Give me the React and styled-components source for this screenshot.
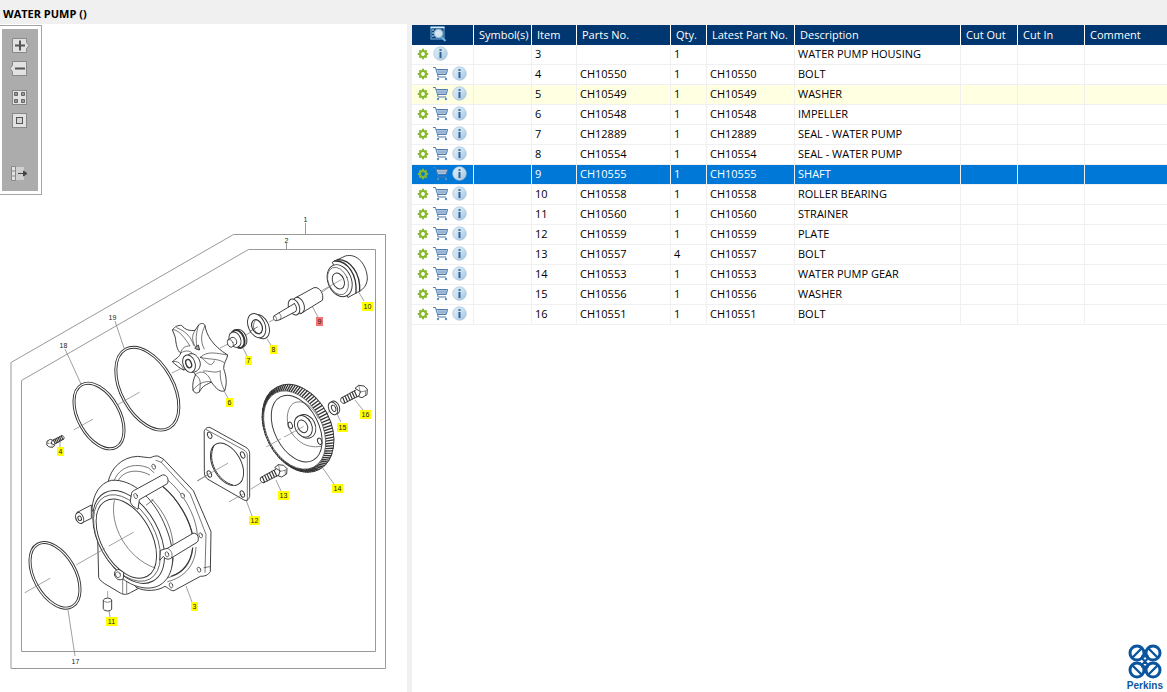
import React, { useState } from "react";
import styled, { createGlobalStyle } from "styled-components";

const GlobalStyle = createGlobalStyle`
  * { box-sizing: border-box; }
  body {
    margin: 0;
    background: #fff;
    color: #000;
    font: 11px/17px "Open Sans", "Noto Sans", sans-serif;
  }
`;

const Page = styled.div`
  display: flex;
  flex-direction: column;
  min-height: 100vh;
`;

const TitleBar = styled.header`
  height: 24px;
  padding: 4px 3px 0;
  background: #f0f0f0;
`;

const Title = styled.h1`
  margin: 0;
  font-size: 11px;
  line-height: 20px;
  font-weight: 700;
`;

const Workspace = styled.main`
  flex: 1;
  display: grid;
  grid-template-columns: 407px 5px minmax(0, 1fr);
`;

const DrawingPane = styled.section`
  position: relative;
  min-width: 0;
`;

const Splitter = styled.div`
  background: #f0f0f0;
`;

const Drawing = styled.svg`
  display: block;
  width: 100%;
  height: auto;
`;

const Callout = styled.text`
  font: 7px "Liberation Sans", sans-serif;
  text-anchor: middle;
  fill: #222;
`;

const Toolbar = styled.nav`
  position: absolute;
  top: 1px;
  left: 0;
  padding: 3px 3px 3px 2px;
  background: #fff;
  border: 1px solid #a5a5a5;
  border-left: 0;
`;

const ToolList = styled.div`
  display: flex;
  flex-direction: column;
  gap: 7px;
  width: 36px;
  padding: 9px 0 9px 8px;
  background: #acacac;
`;

const ToolButton = styled.button`
  display: block;
  width: 20px;
  height: 16px;
  margin: ${(p) => p.$before || 0}px 0 0;
  padding: 0;
  border: 0;
  background: none;
  cursor: pointer;
  svg { display: block; }
`;

const ListPane = styled.section`
  display: flex;
  flex-direction: column;
  min-width: 0;
  overflow: hidden;
`;

const PartsTable = styled.table`
  width: 100%;
  table-layout: fixed;
  border-collapse: separate;
  border-spacing: 0;
  border-top: 1px solid #f0f0f0;
`;

const HeadCell = styled.th`
  height: 20px;
  padding: 0 0 2px 5px;
  border-right: 1px solid #fff;
  background: #003770;
  color: #fff;
  font-weight: 400;
  text-align: left;
  white-space: nowrap;
  &:last-child { border-right: 0; }
`;

const Row = styled.tr`
  background: ${(p) => (p.$selected ? "#0078d7" : p.$marked ? "#ffffe1" : "#fff")};
  color: ${(p) => (p.$selected ? "#fff" : "#000")};
`;

const Cell = styled.td`
  height: 20px;
  padding: 0 0 2px 3px;
  border-right: 1px solid #f0f0f0;
  border-bottom: 1px solid #f0f0f0;
  white-space: nowrap;
  &:last-child { border-right: 0; }
`;

const Actions = styled.div`
  display: flex;
  align-items: center;
  gap: 4px;
  height: 17px;
  padding-left: 2px;
`;

const IconButton = styled.button`
  display: flex;
  padding: 0;
  border: 0;
  background: none;
  cursor: pointer;
`;

const HeadIcon = styled(IconButton)`
  margin-left: 13px;
`;

const Brand = styled.footer`
  display: flex;
  flex-direction: column;
  align-items: center;
  align-self: flex-end;
  margin-top: auto;
  padding-right: 4px;
  color: #0b559f;
  font: 700 10px/12px "Liberation Sans", sans-serif;
`;

const GearIcon = () => (
  <svg width="12" height="12" viewBox="0 0 12 12" fill="none" stroke="#86b82e">
    <path d="M6 .8V3M6 9v2.200M.8 6H3M9 6h2.200M2.400 2.400l1.500 1.500M8.100 8.100l1.500 1.500M9.600 2.400L8.100 3.900M3.900 8.100L2.400 9.600" strokeWidth="2" />
    <circle cx="6" cy="6" r="3" strokeWidth="2.200" />
  </svg>
);

const CartIcon = () => (
  <svg width="15" height="15" viewBox="0 0 15 15" fill="none">
    <path d="M3.500 3.500H14.500l-1.500 5H5z" fill="#c9d8e8" />
    <path d="M6 4v4M8 4v4M10 4v4M12 4v4M4.500 6H14" stroke="#7f9fc4" strokeWidth=".8" />
    <path d="M0 1.500h2.500l2.700 9.500H13M3.300 3.500h11.400l-1.500 5H5" stroke="#4f7bae" />
    <circle cx="5" cy="13" r="1.200" fill="#5b91c0" />
    <circle cx="13" cy="13" r="1.200" fill="#5b91c0" />
  </svg>
);

const InfoIcon = () => (
  <svg width="15" height="15" viewBox="0 0 15 15">
    <defs>
      <linearGradient id="infoFill" x1="0" y1="0" x2="1" y2="1">
        <stop offset="0" stopColor="#dcebf5" />
        <stop offset=".5" stopColor="#c9dfee" />
        <stop offset="1" stopColor="#9dbfd9" />
      </linearGradient>
    </defs>
    <circle cx="7.5" cy="7.5" r="6.8" fill="url(#infoFill)" stroke="#a9c5da" strokeWidth=".7" />
    <rect x="6.500" y="3" width="2" height="2" fill="#3c74aa" />
    <rect x="6.500" y="6" width="2" height="6" fill="#2f6199" />
  </svg>
);

const SearchListIcon = () => (
  <svg width="18" height="16" viewBox="0 0 18 16">
    <rect x="1" y="1" width="13" height="12" fill="#0a3f78" stroke="#78b6dc" />
    <path d="M.5 1.5h14" stroke="#d4ebf7" strokeWidth="1.6" />
    <path d="M2 4h2M2 7h2M2 10h2" stroke="#d4ebf7" />
    <path d="M11.5 11l4 4" stroke="#6eb2dd" strokeWidth="2" />
    <circle cx="8.5" cy="7.5" r="4.2" fill="#d6e3ec" stroke="#8dbbd7" strokeWidth="1.2" />
  </svg>
);

const toolShapes = {
  in: (
    <>
      <path d="M2.5 .5h14v4l2.5 3-2.5 3v4h-14z" />
      <path d="M5 7.5h10M10 2.5v10" stroke="#555" strokeWidth="2" />
    </>
  ),
  out: (
    <>
      <path d="M2.5 .5h14v14h-14v-4L0 7.5l2.5-3z" />
      <path d="M5 7.5h10" stroke="#555" strokeWidth="2" />
    </>
  ),
  tiles: (
    <>
      <rect x="2.5" y=".5" width="14" height="14" />
      <path d="M4.5 2.5h3v3h-3zM11.5 2.5h3v3h-3zM4.5 9.5h3v3h-3zM11.5 9.5h3v3h-3z" fill="#999" stroke="#666" />
    </>
  ),
  fit: (
    <>
      <rect x="2.5" y=".5" width="14" height="14" />
      <rect x="6.500" y="4.500" width="6" height="6" fill="#d4d4d4" stroke="#555" />
    </>
  ),
  export: (
    <>
      <path d="M1.5 .5h4v14h-4zM1.5 5h4M1.5 10h4" />
      <path d="M6 1h8v13H6z" fill="#cfcfcf" stroke="none" />
      <path d="M8 7.5h8M13.5 5l3.500 2.500-3.500 2.500z" fill="#444" stroke="#444" />
    </>
  ),
};

const tools = [
  { id: "in", label: "Zoom in" },
  { id: "out", label: "Zoom out" },
  { id: "tiles", label: "Overview", before: 6 },
  { id: "fit", label: "Fit to window" },
  { id: "export", label: "Export", before: 30 },
];

const columns = [
  { label: "", width: 62 },
  { label: "Symbol(s)", width: 58 },
  { label: "Item", width: 45 },
  { label: "Parts No.", width: 94 },
  { label: "Qty.", width: 36 },
  { label: "Latest Part No.", width: 88 },
  { label: "Description", width: 166 },
  { label: "Cut Out", width: 57 },
  { label: "Cut In", width: 67 },
  { label: "Comment" },
];

const parts = [
  ["3", "", "1", "WATER PUMP HOUSING"],
  ["4", "CH10550", "1", "BOLT"],
  ["5", "CH10549", "1", "WASHER"],
  ["6", "CH10548", "1", "IMPELLER"],
  ["7", "CH12889", "1", "SEAL - WATER PUMP"],
  ["8", "CH10554", "1", "SEAL - WATER PUMP"],
  ["9", "CH10555", "1", "SHAFT"],
  ["10", "CH10558", "1", "ROLLER BEARING"],
  ["11", "CH10560", "1", "STRAINER"],
  ["12", "CH10559", "1", "PLATE"],
  ["13", "CH10557", "4", "BOLT"],
  ["14", "CH10553", "1", "WATER PUMP GEAR"],
  ["15", "CH10556", "1", "WASHER"],
  ["16", "CH10551", "1", "BOLT"],
];

const callouts = [
  ["10", 367, 306], ["9", 319, 321], ["8", 273, 349], ["7", 248, 360],
  ["6", 229, 402], ["16", 365, 414], ["15", 342, 427], ["14", 337, 488],
  ["13", 283, 495], ["12", 254, 520], ["4", 60, 451], ["3", 194, 606], ["11", 111, 621],
];

const plainCallouts = [
  ["1", 305, 219], ["2", 286, 240], ["19", 112, 317], ["18", 63, 345], ["17", 75, 661],
];

// Drawing parts are plotted on a grid three times finer than the sheet.
const Fine = ({ x, y, children }) => (
  <g transform={`translate(${x} ${y}) scale(.33333)`}>{children}</g>
);

const Tilted = ({ cx, cy, rx, ry, angle = -29, ...rest }) => (
  <ellipse cx={cx} cy={cy} rx={rx} ry={ry} transform={`rotate(${angle} ${cx} ${cy})`} {...rest} />
);

const ORing = (props) => (
  <>
    <Tilted {...props} fill="none" stroke="#333" strokeWidth="9" />
    <Tilted {...props} fill="none" stroke="#fff" strokeWidth="3.5" />
  </>
);

const pointOn = (cx, cy, rx, ry, deg, t) => {
  const a = (deg * Math.PI) / 180;
  const x = rx * Math.cos(t);
  const y = ry * Math.sin(t);
  return [cx + x * Math.cos(a) - y * Math.sin(a), cy + x * Math.sin(a) + y * Math.cos(a)];
};

const gearTeeth = Array.from({ length: 92 }, (_, i) => {
  const t = (i * Math.PI * 2) / 92;
  const [x1, y1] = pointOn(344, 180, 84, 126, -27, t);
  const [x2, y2] = pointOn(354, 175, 97, 138, -27, t);
  return `M${x1.toFixed(1)} ${y1.toFixed(1)}L${x2.toFixed(1)} ${y2.toFixed(1)}`;
}).join("");

const Bolt = ({ x, y, s = 1, weight = 1 }) => (
  <g transform={`translate(${x} ${y}) scale(${s})`} strokeWidth={2.8 * weight}>
    <path d="M-60 18 L-16 -6 M-52 34 L-8 12 M-60 18 C-66 24 -60 35 -52 34" />
    <path d="M-56 16l7 17M-49 12l8 17M-42 8l8 17M-35 4l8 17M-28 0l8 17M-21 -3l8 17" strokeWidth={3.4 * weight} />
    <path d="M-18 -12 L-8 -20 L8 -18 L18 -8 L17 8 L2 17 L-8 14 L-3 0 Z" />
    <path d="M-3 0 L12 -3 L18 -8 M12 -3 L13 10 M-8 -20 L-3 0" strokeWidth="1.6" />
  </g>
);

const Exploded = ({ selected }) => (
  <Drawing viewBox="0 24 407 668" role="img" aria-label="Water pump exploded view">
    <g fill="none" stroke="#999">
      <path d="M11 668.500V362.500L233.500 234.500H385.500V668.500Z" />
      <path d="M21.500 651.500V380.500L248.500 249.500H375.500V651.500Z" />
      <path d="M305.500 223V234M286.500 243V249" />
    </g>
    <g fill="none" stroke="#777" strokeWidth=".7">
      <path d="M65 349L81 384M115 321L124 348M68 610L75 656" />
      <path d="M312 306L318 317M358 291L364 301M267 339L271 345M243 348L247 356M224 391L228 398" />
      <path d="M355 400L363 410M337 414L341 422M322 467L334 484M276 480L281 491M246 500L252 516" />
      <path d="M60 441V447M186 586L192 602M109 611L110 617" />
      <path d="M322 292L340 280M269 322L283 315M246 335L259 327M220 348L230 343M172 373L190 364" />
    </g>
    <g fill="#fff" stroke="#333" strokeWidth="2.8" strokeLinejoin="round" strokeLinecap="round">
      <Fine x={0} y={340}>
        <ORing cx={442} cy={146} rx={78} ry={135} />
        <ORing cx={297} cy={228} rx={62} ry={107} />
        <path d="M222 269L278 238M353 194L418 157" stroke="#777" strokeWidth="2" />
        <Bolt x={152} y={309} s={-0.65} weight={1.5} />
      </Fine>
      <Fine x={160} y={210}>
        <path d="M518 156L556 138C592 128 622 166 622 207C620 230 606 241 592 247L565 262Z" />
        <path d="M532 149C573 148 602 192 599 243M524 153C563 151 592 194 588 249" fill="none" strokeWidth="4" />
        <Tilted cx={539} cy={212} rx={35} ry={50} angle={-23} />
        <Tilted cx={534} cy={213} rx={29} ry={43} angle={-23} strokeWidth="1.8" />
        <Tilted cx={535} cy={213} rx={17} ry={25} angle={-23} />
        <path d="M485 242L544 209" stroke="#777" strokeWidth="2" />
        <path d="M407 263L462 233C479 229 493 253 487 271L422 311Z" />
        <Tilted cx={416} cy={286} rx={16} ry={25} angle={-22} />
        <Tilted cx={402} cy={291} rx={16} ry={25} angle={-22} />
        <path d="M403 281L356 309L342 318C338 324 341 332 349 332L360 329L408 304C412 296 408 285 403 281Z" />
        <path d="M356 309C363 312 366 322 360 329M342 318C348 318 352 326 349 332" fill="none" strokeWidth="1.8" />
        <Tilted cx={301} cy={350} rx={25} ry={38} angle={-23} />
        <Tilted cx={290} cy={347} rx={25} ry={38} angle={-23} />
        <Tilted cx={291} cy={350} rx={15} ry={22} angle={-23} strokeWidth="3.5" />
        <path d="M270 364L292 351M285 332C274 350 283 368 298 372" fill="none" strokeWidth="2" />
        <Tilted cx={242} cy={384} rx={17} ry={27} angle={-23} />
        <Tilted cx={234} cy={387} rx={18} ry={28} angle={-23} strokeWidth="6" />
        <Tilted cx={225} cy={389} rx={17} ry={24} angle={-23} />
        <path d="M204 390L216 382C227 381 233 395 229 402L214 411C203 410 200 400 204 390Z" />
        <Tilted cx={211} cy={400} rx={8} ry={12} angle={-23} strokeWidth="1.8" />

        <path d="M38 359C45 348 55 346 65 346C75 360 90 363 105 361L116 345C124 338 132 339 135 347C139 374 157 407 203 435C202 447 190 459 191 476C199 499 202 519 194 542C183 548 169 538 154 516C143 523 127 526 118 546C110 551 103 550 99 540C96 521 101 507 107 493C91 476 81 476 71 480C58 474 47 465 37 455C45 448 60 440 62 429C51 423 48 400 46 383Z" />
        <path d="M38 359C54 356 76 386 90 408C78 407 65 413 62 429M50 353C80 365 94 383 101 406M105 361C92 380 99 398 106 410M116 345C107 371 108 389 110 407M135 347C122 372 121 396 133 417M121 442C142 420 174 431 203 435M121 442C150 450 172 444 191 457M122 442C137 449 151 480 163 453M37 455C52 451 65 460 71 480M63 428C72 423 89 418 98 431M107 493C122 481 142 483 154 516M130 483C148 481 166 492 181 482C179 503 185 528 194 542M99 540C115 521 129 513 152 515M104 493C119 503 125 509 118 546" fill="none" strokeWidth="2" />
        <path d="M105 413L115 405L119 420L108 417Z" fill="#aaa" />
        <path d="M86 433C99 424 119 440 121 461C121 480 106 488 96 487Z" />
        <Tilted cx={87} cy={461} rx={18} ry={27} angle={-20} />
        <Tilted cx={86} cy={461} rx={8} ry={13} angle={-20} strokeWidth="4" />
      </Fine>
      <Fine x={180} y={370}>
        <Tilted cx={354} cy={175} rx={98} ry={139} angle={-27} />
        <path d={gearTeeth} strokeWidth="4" />
        <Tilted cx={344} cy={180} rx={83} ry={125} angle={-27} strokeWidth="2" />
        <Tilted cx={350} cy={176} rx={66} ry={107} angle={-27} />
        <path d="M325 170C315 130 330 103 344 98C371 88 400 111 415 145M325 170C343 211 377 237 423 229" fill="none" strokeWidth="1.8" />
        <Tilted cx={377} cy={169} rx={29} ry={37} angle={-27} />
        <Tilted cx={370} cy={169} rx={25} ry={34} angle={-27} />
        <Tilted cx={368} cy={169} rx={14} ry={20} angle={-27} />
        <Tilted cx={331} cy={166} rx={6} ry={10} angle={-20} />
        <Tilted cx={419} cy={214} rx={6} ry={10} angle={-20} />
        <path d="M260 230L302 207M313 201L370 170M443 128L452 122" stroke="#777" strokeWidth="2" />
        <Tilted cx={465} cy={112} rx={13} ry={20} angle={-23} />
        <Tilted cx={459} cy={115} rx={13} ry={20} angle={-23} />
        <Tilted cx={461} cy={115} rx={6} ry={10} angle={-23} />
        <Bolt x={544} y={66} />
        <Bolt x={303} y={304} />
        <path d="M73 183C76 174 84 169 93 174L196 231C204 235 209 242 209 251V379C207 389 200 394 192 390L84 328C76 323 73 315 73 306Z" />
        <path d="M79 179L190 239C198 243 202 249 202 257V391" fill="none" strokeWidth="2" />
        <Tilted cx={141} cy={283} rx={42} ry={69} angle={-29} />
        <path d="M101 229C80 271 113 333 158 345" fill="none" strokeWidth="3" />
        {[[89, 196], [188, 255], [88, 312], [187, 372]].map(([x, y]) => (
          <Tilted key={`${x}-${y}`} cx={x} cy={y} rx={6} ry={10} angle={-23} />
        ))}
        <path d="M52 332L143 280M148 395L190 372M213 357L244 338" stroke="#777" strokeWidth="2" />
      </Fine>
      <Fine x={0} y={440}>
        <ORing cx={165} cy={406} rx={62} ry={107} />
        <path d="M75 458L150 415" stroke="#777" strokeWidth="2" />
        <path d="M293 290L296 412C299 421 307 426 314 431L361 459C371 465 382 464 391 458L414 446L400 370Z" />
        <path d="M368 415V460M380 420V460" strokeWidth="1.8" />
        <path d="M325 123C333 86 364 51 413 49L446 53C455 55 459 46 474 48L491 58L580 152L633 275L631 394C625 406 613 409 601 409L522 452C513 454 504 443 495 439C475 452 438 457 408 442L340 250Z" />
        <path d="M468 61L484 67L571 162L618 283L615 397M484 67L491 58M343 121C357 81 405 66 446 84L462 98M355 121C370 91 414 85 449 105M504 121C548 156 593 233 592 292M488 139C538 180 571 245 579 292M578 324C575 374 546 404 500 414M588 322C586 374 555 412 503 425M456 178C494 218 519 268 520 325M520 354C516 391 502 411 485 418M612 383L630 380" fill="none" strokeWidth="2" />
        <path d="M488 139C538 180 571 245 579 292M578 324C573 366 550 397 515 408" fill="none" strokeWidth="3.5" />
        <path d="M276 206C279 162 300 129 334 121C397 116 457 172 491 247C531 334 526 407 480 435C445 455 397 440 365 414Z" />
        <path d="M232 217L274 195V235L243 250C229 249 222 232 232 217Z" />
        <Tilted cx={239} cy={234} rx={11} ry={17} angle={-23} />
        <Tilted cx={239} cy={235} rx={5} ry={7} angle={-23} />
        <Tilted cx={386} cy={291} rx={90} ry={151} />
        <Tilted cx={381} cy={294} rx={84} ry={141} strokeWidth="2" />
        <path d="M344 405C340 386 361 383 371 398L370 416C357 424 347 417 344 405Z" />
        <Tilted cx={379} cy={296} rx={75} ry={129} />
        <path d="M343 182C328 254 378 353 465 384" fill="none" strokeWidth="1.8" />
        <Tilted cx={354} cy={404} rx={7} ry={9} angle={-23} strokeWidth="2" />
        <path d="M394 164C394 157 398 153 403 151L487 105C501 102 508 119 502 131L418 179L414 208C403 202 392 195 391 184Z" />
        <path d="M439 195L459 180" fill="none" strokeWidth="2" />
        <Tilted cx={407} cy={168} rx={5} ry={8} angle={-20} strokeWidth="2" />
        <path d="M482 331C488 328 496 327 502 325L579 280C594 277 600 299 591 307L514 354C506 360 495 358 490 349L480 360Z" />
        <path d="M502 325C515 329 520 345 514 354" fill="none" strokeWidth="2" />
        <Tilted cx={501} cy={343} rx={5} ry={8} angle={-20} strokeWidth="2" />
        {[[461, 80], [548, 167], [602, 286], [597, 389], [513, 436]].map(([x, y]) => (
          <Tilted key={`${x}-${y}`} cx={x} cy={y} rx={5} ry={8} angle={-20} strokeWidth="2" />
        ))}
        <path d="M230 374L314 326M327 318L400 277M594 122L622 106M323 454V474" stroke="#777" strokeWidth="2" />
        <path d="M310 481C311 472 334 472 335 481V507C333 515 312 515 310 507Z" />
        <path d="M310 481C312 489 333 489 335 481" fill="none" strokeWidth="1.8" />
      </Fine>
    </g>
    {callouts.map(([n, x, y]) => (
      <g key={n}>
        <rect x={x - (n.length > 1 ? 5 : 3)} y={y - 4} width={n.length > 1 ? 11 : 7} height="9" fill={n === selected ? "#f27272" : "#ffff00"} />
        <Callout x={x + 0.5} y={y + 3}>{n}</Callout>
      </g>
    ))}
    {plainCallouts.map(([n, x, y]) => (
      <Callout key={n} x={x + 0.5} y={y + 3}>{n}</Callout>
    ))}
  </Drawing>
);

const KnotMark = () => (
  <svg width="34" height="36" viewBox="0 0 34 36" fill="none" stroke="#0b559f">
    <g strokeWidth="3">
      <circle cx="9" cy="9" r="7" />
      <circle cx="25" cy="9" r="7" />
      <circle cx="9" cy="26" r="7" />
      <circle cx="25" cy="26" r="7" />
    </g>
    <path d="M4 14L14 4M20 4L30 14M4 21L14 31M20 31L30 21" strokeWidth="2.400" />
    <path d="M13 12.500H21M13 22.500H21M13 13L17 17.500L13 22M21 13L17 17.500L21 22" strokeWidth="2" />
  </svg>
);

export default function App() {
  const [selected, setSelected] = useState("9");
  return (
    <Page>
      <GlobalStyle />
      <TitleBar>
        <Title>WATER PUMP ()</Title>
      </TitleBar>
      <Workspace>
        <DrawingPane>
          <Exploded selected={selected} />
          <Toolbar aria-label="Drawing tools">
            <ToolList>
              {tools.map((t) => (
                <ToolButton key={t.id} type="button" aria-label={t.label} $before={t.before}>
                  <svg width="20" height="16" viewBox="0 0 20 16" fill="#e2e2e2" stroke="#888">
                    {toolShapes[t.id]}
                  </svg>
                </ToolButton>
              ))}
            </ToolList>
          </Toolbar>
        </DrawingPane>
        <Splitter />
        <ListPane>
          <PartsTable>
            <colgroup>
              {columns.map((c, i) => (
                <col key={i} width={c.width} />
              ))}
            </colgroup>
            <thead>
              <tr>
                {columns.map((c, i) => (
                  <HeadCell key={i} scope="col">
                    {c.label || (
                      <HeadIcon type="button" aria-label="Search list">
                        <SearchListIcon />
                      </HeadIcon>
                    )}
                  </HeadCell>
                ))}
              </tr>
            </thead>
            <tbody>
              {parts.map(([item, number, qty, description]) => (
                <Row
                  key={item}
                  $selected={item === selected}
                  $marked={item === "5"}
                  onClick={() => setSelected(item)}
                >
                  <Cell>
                    <Actions>
                      <IconButton type="button" aria-label="Options"><GearIcon /></IconButton>
                      {number && (
                        <IconButton type="button" aria-label="Add to cart"><CartIcon /></IconButton>
                      )}
                      <IconButton type="button" aria-label="Information"><InfoIcon /></IconButton>
                    </Actions>
                  </Cell>
                  <Cell />
                  <Cell>{item}</Cell>
                  <Cell>{number}</Cell>
                  <Cell>{qty}</Cell>
                  <Cell>{number}</Cell>
                  <Cell>{description}</Cell>
                  <Cell />
                  <Cell />
                  <Cell />
                </Row>
              ))}
            </tbody>
          </PartsTable>
          <Brand>
            <KnotMark />
            Perkins
          </Brand>
        </ListPane>
      </Workspace>
    </Page>
  );
}
